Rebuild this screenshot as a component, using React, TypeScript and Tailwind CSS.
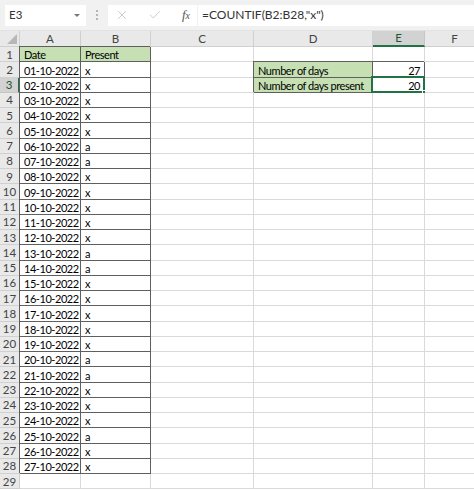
import { X, Check } from "lucide-react";

const cols = ["A", "B", "C", "D", "E", "F"];

// Column B value for rows 2..28
const present = "xxxxxaaxxxxxaaxxxxxaaxxxaxx".split("");

const rows = Array.from({ length: 29 }, (_, i) => i + 1);

const dark = "border-r border-b border-[#5f5f5f] shadow-[-1px_-1px_0_#5f5f5f]";
const light = "border-r border-b border-[#dadada]";

function Cell({
  children,
  bordered,
  green,
  right,
  selected,
}: {
  children?: React.ReactNode;
  bordered?: boolean;
  green?: boolean;
  right?: boolean;
  selected?: boolean;
}) {
  return (
    <div
      className={`relative flex items-end pb-px pl-[4px] pr-[4px] whitespace-nowrap text-[11px] tracking-[-0.45px] leading-none text-black ${
        bordered ? dark : light
      } ${green ? "bg-[#c6e0b4]" : "bg-white"} ${right ? "justify-end" : ""}`}
    >
      {children}
      {selected && (
        <div className="absolute -left-[2px] -top-[2px] -right-[1px] -bottom-[1px] border-2 border-[#217346]">
          <div className="absolute -right-[4px] -bottom-[4px] w-[5px] h-[5px] bg-[#217346] border border-white" />
        </div>
      )}
    </div>
  );
}

function FormulaBar() {
  return (
    <div className="h-[31px] bg-[#f1f1f1] flex items-center pl-[5px] border-b border-[#e2e2e2]">
      <div className="w-[81px] h-[21px] bg-white flex items-center justify-between pl-[4px] pr-[6px] text-[11.5px] text-[#333]">
        <span>E3</span>
        <span className="w-0 h-0 border-l-[3px] border-r-[3px] border-t-[3px] border-l-transparent border-r-transparent border-t-[#777]" />
      </div>
      <div className="w-[22px] flex flex-col items-center gap-[2px]">
        <span className="w-[2px] h-[2px] bg-[#b5b5b5]" />
        <span className="w-[2px] h-[2px] bg-[#b5b5b5]" />
        <span className="w-[2px] h-[2px] bg-[#b5b5b5]" />
      </div>
      <div className="w-[89px] h-[21px] bg-white flex items-center justify-between pl-[7px] pr-[7px]">
        <X size={14} strokeWidth={1.2} color="#b4b4b4" />
        <Check size={14} strokeWidth={1.2} color="#b4b4b4" />
        <span className="font-['Liberation_Serif',serif] italic text-[13px] text-[#555]">
          f<span className="text-[10px]">x</span>
        </span>
      </div>
      <div className="flex-1 ml-px h-[21px] bg-white flex items-center pl-[4px] text-[12px] text-[#333]">
        =COUNTIF(B2:B28,"x")
      </div>
    </div>
  );
}

export default function App() {
  return (
    <div className="w-[474px] h-[490px] overflow-hidden bg-white font-['Lato',sans-serif]">
      <FormulaBar />
      <div className="grid grid-cols-[20px_61px_70px_103px_119px_52px_60px] grid-rows-[16px_repeat(29,15.26px)]">
        {/* corner + column headers */}
        <div className="relative bg-[#e9e9e9] border-r border-b border-[#d0d0d0]">
          <svg className="absolute right-[2px] bottom-[2px]" width="10" height="10">
            <polygon points="10,0 10,10 0,10" fill="#b7b7b7" />
          </svg>
        </div>
        {cols.map((c) => (
          <div
            key={c}
            className={`flex items-center justify-center text-[11.5px] border-r ${
              c === "E"
                ? "bg-[#d2d2d2] text-[#1f5234] border-b-2 border-b-[#217346] border-r-[#c6c6c6]"
                : "bg-[#e9e9e9] text-[#444] border-b border-[#d0d0d0]"
            }`}
          >
            {c}
          </div>
        ))}

        {rows.map((r) => {
          const inTable = r <= 28;
          const day = String(r - 1).padStart(2, "0");
          return [
            <div
              key={`h${r}`}
              className={`flex items-center justify-center text-[11.5px] border-b ${
                r === 3
                  ? "bg-[#d2d2d2] text-[#1f5234] border-r-2 border-r-[#217346] border-b-[#c6c6c6]"
                  : "bg-[#e9e9e9] text-[#444] border-r border-[#d0d0d0]"
              }`}
            >
              {r}
            </div>,
            <Cell key={`a${r}`} bordered={inTable} green={r === 1}>
              {r === 1 ? "Date" : inTable ? `${day}-10-2022` : ""}
            </Cell>,
            <Cell key={`b${r}`} bordered={inTable} green={r === 1}>
              {r === 1 ? "Present" : inTable ? present[r - 2] : ""}
            </Cell>,
            <Cell key={`c${r}`} />,
            <Cell key={`d${r}`} bordered={r === 2 || r === 3} green={r === 2 || r === 3}>
              {r === 2 ? "Number of days" : r === 3 ? "Number of days present" : ""}
            </Cell>,
            <Cell key={`e${r}`} bordered={r === 2 || r === 3} right selected={r === 3}>
              {r === 2 ? "27" : r === 3 ? "20" : ""}
            </Cell>,
            <Cell key={`f${r}`} />,
          ];
        })}
      </div>
    </div>
  );
}
